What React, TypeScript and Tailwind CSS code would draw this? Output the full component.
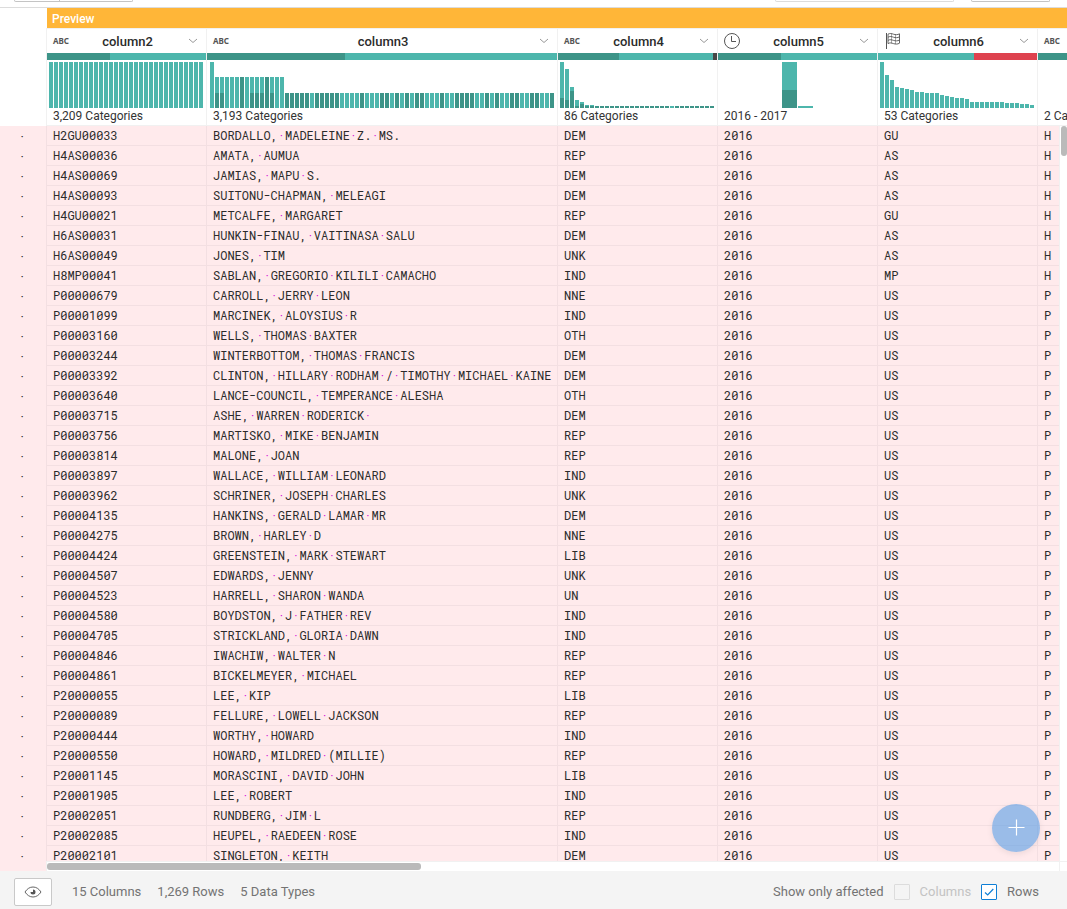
import React from "react";

type Kind = "text" | "date" | "state";
type Bar = [height: number, dark: number];
type Segment = { color: string; width?: number };

type Column = {
  name: string;
  kind: Kind;
  summary: string;
  width: number;
  quality: Segment[];
  bars: Bar[];
  wide?: boolean;
  inset?: number;
};

const LIGHT = "#4db6ac";
const DARK = "#3d9488";

const repeat = (n: number, bar: Bar): Bar[] => Array.from({ length: n }, () => bar);

const column3Tail = "DDDDDLDDDDDLLLLDLLLDDLDLDLDDLLLDLLDDDDLLDLDLLDDLLDDLLD";

const columns: Column[] = [
  {
    name: "column2",
    kind: "text",
    summary: "3,209 Categories",
    width: 160,
    quality: [{ color: DARK, width: 63 }, { color: LIGHT }],
    bars: repeat(31, [46, 0]),
  },
  {
    name: "column3",
    kind: "text",
    summary: "3,193 Categories",
    width: 351,
    inset: 3,
    quality: [{ color: DARK, width: 138 }, { color: LIGHT }],
    bars: [
      [46, 0], [31, 15], [31, 15], [31, 0], [31, 0], [31, 0], [31, 31], [31, 0],
      [31, 15], [31, 15], [31, 15], [31, 31], [31, 15], [31, 0], [31, 0],
      ...column3Tail.split("").map((c): Bar => [15, c === "D" ? 15 : 0]),
    ],
  },
  {
    name: "column4",
    kind: "text",
    summary: "86 Categories",
    width: 160,
    quality: [{ color: DARK, width: 61 }, { color: LIGHT }, { color: "#474747", width: 4 }],
    bars: [
      [46, 10], [39, 8], [21, 17], [8, 2], [6, 4], [3, 2], [3, 2],
      ...repeat(15, [2, 2]), [2, 0], ...repeat(8, [2, 2]),
    ],
  },
  {
    name: "column5",
    kind: "date",
    summary: "2016 - 2017",
    width: 160,
    inset: 64,
    wide: true,
    quality: [{ color: DARK, width: 63 }, { color: LIGHT }],
    bars: [[46, 18], [2, 0]],
  },
  {
    name: "column6",
    kind: "state",
    summary: "53 Categories",
    width: 160,
    quality: [{ color: LIGHT, width: 96 }, { color: "#de424f" }],
    bars: [46, 33, 28, 21, 20, 19, 18, 16, 16, 15, 15, 15, 13, 12, 11, 10, 10, 9, 6, 6, 6, 6, 6, 6, 6, 5, 5, 5, 4, 4, 3].map(
      (h): Bar => [h, 0],
    ),
  },
  {
    name: "column7",
    kind: "text",
    summary: "2 Categories",
    width: 160,
    quality: [{ color: DARK }],
    bars: [],
  },
];

const rows: string[][] = [
  ["H2GU00033", "BORDALLO, MADELEINE Z. MS.", "DEM", "GU"],
  ["H4AS00036", "AMATA, AUMUA", "REP", "AS"],
  ["H4AS00069", "JAMIAS, MAPU S.", "DEM", "AS"],
  ["H4AS00093", "SUITONU-CHAPMAN, MELEAGI", "DEM", "AS"],
  ["H4GU00021", "METCALFE, MARGARET", "REP", "GU"],
  ["H6AS00031", "HUNKIN-FINAU, VAITINASA SALU", "DEM", "AS"],
  ["H6AS00049", "JONES, TIM", "UNK", "AS"],
  ["H8MP00041", "SABLAN, GREGORIO KILILI CAMACHO", "IND", "MP"],
  ["P00000679", "CARROLL, JERRY LEON", "NNE", "US"],
  ["P00001099", "MARCINEK, ALOYSIUS R", "IND", "US"],
  ["P00003160", "WELLS, THOMAS BAXTER", "OTH", "US"],
  ["P00003244", "WINTERBOTTOM, THOMAS FRANCIS", "DEM", "US"],
  ["P00003392", "CLINTON, HILLARY RODHAM / TIMOTHY MICHAEL KAINE", "DEM", "US"],
  ["P00003640", "LANCE-COUNCIL, TEMPERANCE ALESHA", "OTH", "US"],
  ["P00003715", "ASHE, WARREN RODERICK ", "DEM", "US"],
  ["P00003756", "MARTISKO, MIKE BENJAMIN", "REP", "US"],
  ["P00003814", "MALONE, JOAN", "REP", "US"],
  ["P00003897", "WALLACE, WILLIAM LEONARD", "IND", "US"],
  ["P00003962", "SCHRINER, JOSEPH CHARLES", "UNK", "US"],
  ["P00004135", "HANKINS, GERALD LAMAR MR", "DEM", "US"],
  ["P00004275", "BROWN, HARLEY D", "NNE", "US"],
  ["P00004424", "GREENSTEIN, MARK STEWART", "LIB", "US"],
  ["P00004507", "EDWARDS, JENNY", "UNK", "US"],
  ["P00004523", "HARRELL, SHARON WANDA", "UN", "US"],
  ["P00004580", "BOYDSTON, J FATHER REV", "IND", "US"],
  ["P00004705", "STRICKLAND, GLORIA DAWN", "IND", "US"],
  ["P00004846", "IWACHIW, WALTER N", "REP", "US"],
  ["P00004861", "BICKELMEYER, MICHAEL", "REP", "US"],
  ["P20000055", "LEE, KIP", "LIB", "US"],
  ["P20000089", "FELLURE, LOWELL JACKSON", "REP", "US"],
  ["P20000444", "WORTHY, HOWARD", "IND", "US"],
  ["P20000550", "HOWARD, MILDRED (MILLIE)", "REP", "US"],
  ["P20001145", "MORASCINI, DAVID JOHN", "LIB", "US"],
  ["P20001905", "LEE, ROBERT", "IND", "US"],
  ["P20002051", "RUNDBERG, JIM L", "REP", "US"],
  ["P20002085", "HEUPEL, RAEDEEN ROSE", "IND", "US"],
  ["P20002101", "SINGLETON, KEITH", "DEM", "US"],
];

function KindIcon({ kind }: { kind: Kind }) {
  if (kind === "date") {
    return (
      <svg width="17" height="17" viewBox="0 0 17 17" fill="none" stroke="#555" aria-hidden="true">
        <circle cx="8" cy="8" r="7.5" />
        <path d="M7.500 3v5.500h4.500" />
      </svg>
    );
  }
  if (kind === "state") {
    return (
      <svg width="17" height="17" viewBox="0 0 17 17" fill="none" stroke="#555" aria-hidden="true">
        <path d="M2.500 0v16" />
        <path
          strokeWidth=".9"
          d="M4 1.200c2-1.200 3.600-.6 5.500 0s4 .8 6-.4v9.400c-2 1.200-4 1-6 .4s-3.500-1.200-5.500 0zM4 4.200c2-1.200 3.600-.6 5.500 0s4 .8 6-.4M4 7.400c2-1.200 3.600-.6 5.500 0s4 .8 6-.4"
        />
        <path strokeWidth=".5" d="M7.500 .7v9.500M11.500 1.500v9.500" />
      </svg>
    );
  }
  return (
    <span className="font-['Noto_Sans','Open_Sans',sans-serif] text-[8px] leading-4 font-bold text-[#555]">ABC</span>
  );
}

function Histogram({ bars, wide, inset = 2 }: { bars: Bar[]; wide?: boolean; inset?: number }) {
  const barWidth = wide ? 15 : 4;
  return (
    <svg className="mt-[2px] block w-full" height="46" shapeRendering="crispEdges" aria-hidden="true">
      {bars.map(([height, dark], i) => {
        const x = inset + i * (barWidth + 1);
        return (
          <g key={i}>
            <rect x={x} y={46 - height} width={barWidth} height={height} fill={LIGHT} />
            <rect x={x} y={46 - dark} width={barWidth} height={dark} fill={DARK} />
          </g>
        );
      })}
    </svg>
  );
}

function HeaderCell({ column }: { column: Column }) {
  return (
    <th scope="col" className="border-l border-b border-t border-[#f1f1f1] p-0 text-left align-top font-normal">
      <div className="grid h-6 grid-cols-[28px_1fr_24px] items-center pr-2 pl-[6px]">
        <span className="flex items-center">
          <KindIcon kind={column.kind} />
        </span>
        <span className="pt-[2px] text-center text-[13px] leading-[22px] font-medium text-[#2b2b2b]">
          {column.name}
        </span>
        <button type="button" aria-label={`${column.name} menu`} className="flex h-6 items-center justify-end">
          <svg width="10" height="6" viewBox="0 0 10 6" fill="none" stroke="#999">
            <path d="M1 1l4 3.500L9 1" />
          </svg>
        </button>
      </div>
      <div className="flex h-[7px]">
        {column.quality.map((segment, i) => (
          <span
            key={i}
            className={segment.width ? "shrink-0" : "flex-1"}
            style={{ backgroundColor: segment.color, width: segment.width }}
          />
        ))}
      </div>
      <Histogram bars={column.bars} wide={column.wide} inset={column.inset} />
      <div className="h-[17px] overflow-hidden pl-[6px] text-xs leading-4 whitespace-nowrap text-[#333]">
        {column.summary}
      </div>
    </th>
  );
}

function Value({ text }: { text: string }) {
  return (
    <>
      {text.split(/( )/).map((part, i) =>
        part === " " ? (
          <span key={i} className="text-[#d81bd8]">·</span>
        ) : (
          part
        ),
      )}
    </>
  );
}

function DataRow({ row }: { row: string[] }) {
  const [id, name, party, state] = row;
  const cells = [id, name, party, "2016", state, id[0]];
  return (
    <tr className="h-5">
      <td className="p-0 pr-[2px] text-center leading-[19px]">·</td>
      {cells.map((text, i) => (
        <td
          key={i}
          className="overflow-hidden border-b border-l border-[#f3dfe2] py-0 pr-0 pl-[6px] leading-[19px] whitespace-pre"
        >
          <Value text={text} />
        </td>
      ))}
    </tr>
  );
}

function FilterBox({ label, checked, disabled }: { label: string; checked?: boolean; disabled?: boolean }) {
  return (
    <label className={disabled ? "flex items-center gap-[10px] text-[#c3c3c3]" : "flex items-center gap-[10px]"}>
      <span className="relative flex">
        <input
          type="checkbox"
          defaultChecked={checked}
          disabled={disabled}
          className="peer h-4 w-4 appearance-none rounded-[1px] border border-[#0f7fd6] bg-white disabled:border-[#dcdcdc] disabled:bg-[#f4f4f4]"
        />
        <svg
          className="pointer-events-none absolute inset-0 hidden peer-checked:block"
          width="16"
          height="16"
          viewBox="0 0 16 16"
          fill="none"
          stroke="#0f7fd6"
          strokeWidth="1.200"
        >
          <path d="M4 8.500l2.700 2.500L12.300 5" />
        </svg>
      </span>
      {label}
    </label>
  );
}

export default function App() {
  return (
    <div className="flex h-screen flex-col overflow-hidden bg-white font-[Roboto,sans-serif] text-[#333]">
      <div className="flex h-2 shrink-0 items-start justify-between border-b border-[#dcdcdc] pr-[17px] pl-[14px]">
        <div className="flex h-[2px] w-[119px] rounded-b-[2px] border border-t-0 border-[#c4c4c4]">
          <span className="w-[45px] border-r border-[#c4c4c4]" />
        </div>
        <div className="flex gap-[17px]">
          <div className="h-[2px] w-[179px] rounded-b-[2px] border border-t-0 border-[#dcdcdc]" />
          <div className="h-[2px] w-[79px] rounded-b-[2px] border border-t-0 border-[#c4c4c4]" />
        </div>
      </div>

      <main className="relative flex min-h-0 flex-1 flex-col">
        <div className="ml-[47px] h-5 shrink-0 bg-[#ffb638] pt-px pl-[5px] text-xs leading-5 font-medium text-white">
          Preview
        </div>
        <div className="relative min-h-0 flex-1 overflow-hidden">
          <table className="w-[1197px] table-fixed border-separate border-spacing-0">
            <colgroup>
              <col className="w-[46px]" />
              {columns.map((column) => (
                <col key={column.name} style={{ width: column.width }} />
              ))}
            </colgroup>
            <thead>
              <tr>
                <td className="p-0" />
                {columns.map((column) => (
                  <HeaderCell key={column.name} column={column} />
                ))}
              </tr>
            </thead>
            <tbody className="bg-[#ffeaec] font-['Roboto_Mono','Liberation_Mono',monospace] text-xs text-[#2b2b2b]">
              {rows.map((row) => (
                <DataRow key={row[0]} row={row} />
              ))}
            </tbody>
          </table>
          <div className="absolute top-[98px] right-0 bottom-0 w-2 border-l border-[#f1f1f1] bg-white pl-px">
            <div className="h-[30px] rounded-[3px] bg-[#bababa]" />
          </div>
        </div>
        <div className="flex h-[10px] shrink-0">
          <div className="w-[46px] bg-[#ffeaec]" />
          <div className="flex-1 border-t border-l border-[#f1f1f1] pt-px">
            <div className="h-[7px] w-[374px] rounded-[3px] bg-[#bababa]" />
          </div>
          <div className="w-2 border-t border-l border-[#f1f1f1]" />
        </div>
        <button
          type="button"
          aria-label="Add"
          className="absolute right-[27px] bottom-[19px] flex h-12 w-12 items-center justify-center rounded-full bg-[#579de6]/60 shadow-[0_2px_6px_rgba(0,0,0,0.08)]"
        >
          <svg width="18" height="18" viewBox="0 0 18 18" stroke="#fff" strokeWidth="1.200">
            <path d="M9.500 .5v16M1.500 8.500h16" />
          </svg>
        </button>
      </main>

      <footer className="flex h-[38px] shrink-0 items-center justify-between bg-[#f4f4f4] pt-1 pr-7 pl-[14px] text-[13px] leading-5 text-[#737373]">
        <div className="flex items-center gap-4">
          <button
            type="button"
            aria-label="Toggle visible columns"
            className="mr-1 flex h-7 w-[38px] items-center justify-center rounded-[2px] border border-[#c9c9c9] bg-white"
          >
            <svg width="18" height="14" viewBox="0 0 18 14" fill="none" stroke="#666">
              <path d="M1 7c2.200-3.300 4.800-5 8-5s5.800 1.700 8 5c-2.200 3.300-4.800 5-8 5s-5.800-1.700-8-5z" />
              <path fill="#555" stroke="none" d="M9 4.500a2.500 2.500 0 1 1-2.500 2.500h2.500z" />
            </svg>
          </button>
          <span>15 Columns</span>
          <span>1,269 Rows</span>
          <span>5 Data Types</span>
        </div>
        <div className="flex items-center gap-[10px]">
          <span>Show only affected</span>
          <FilterBox label="Columns" disabled />
          <FilterBox label="Rows" checked />
        </div>
      </footer>
    </div>
  );
}
